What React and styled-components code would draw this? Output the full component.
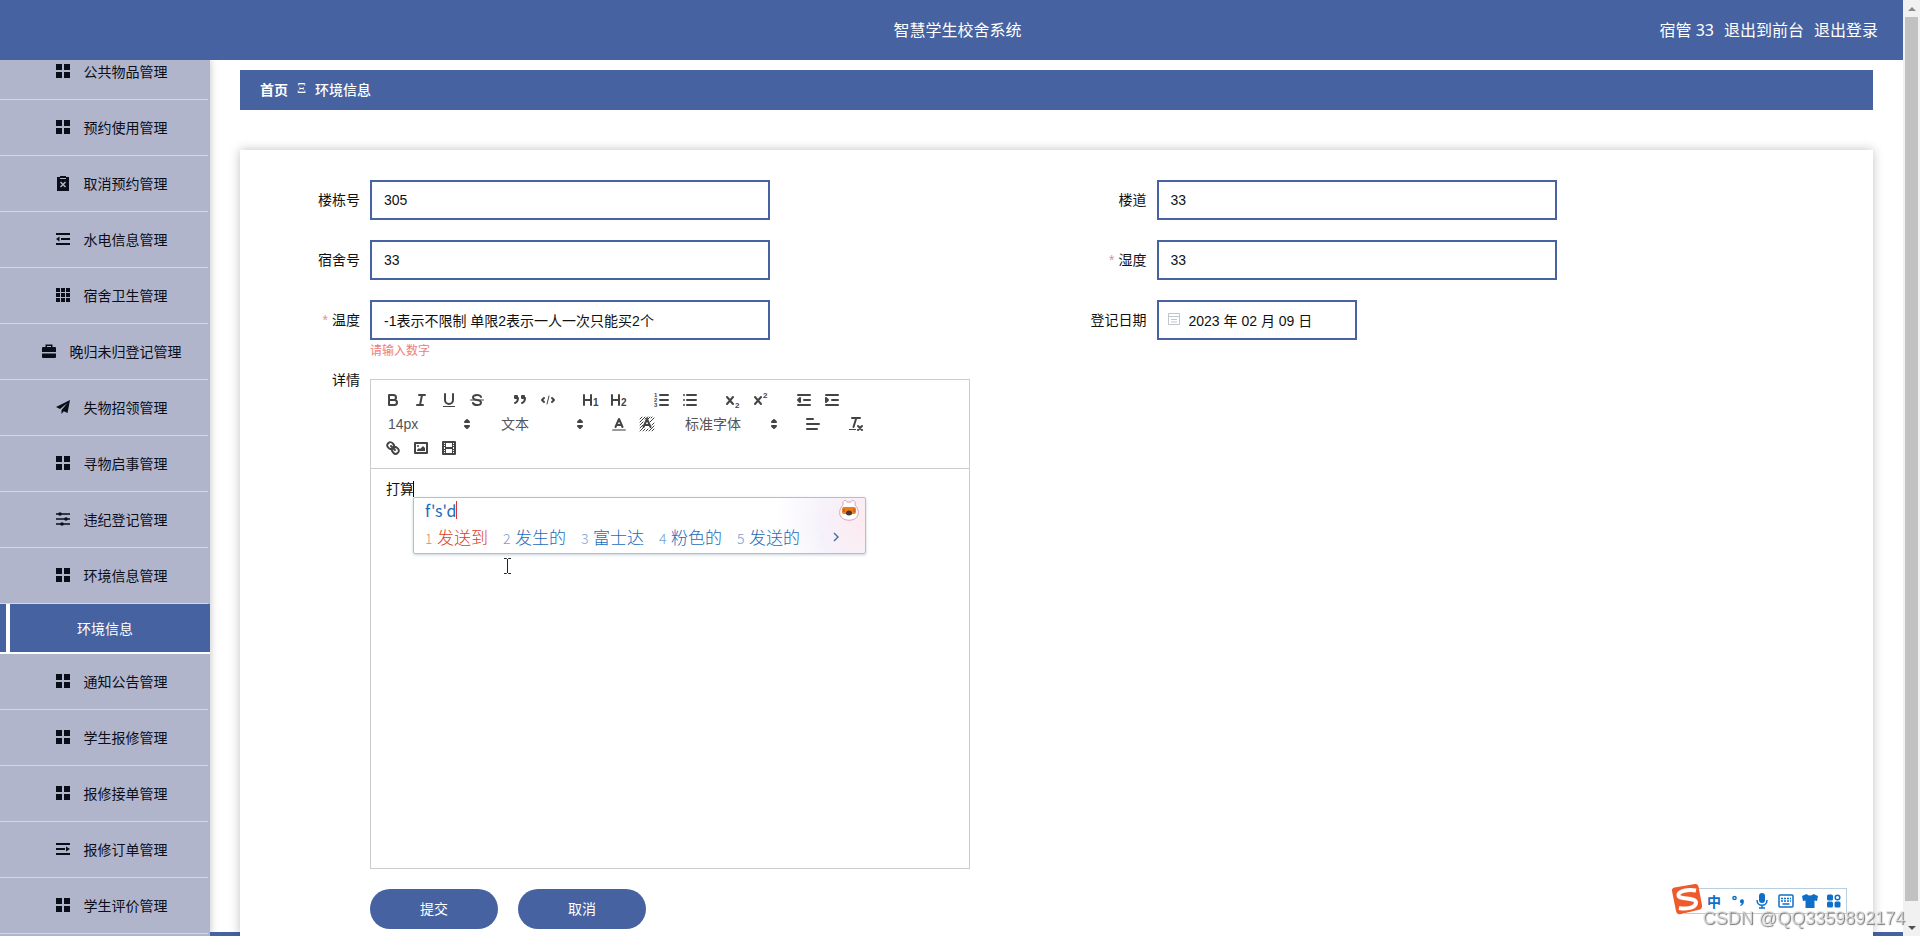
import React, { useState } from "react";
import styled, { createGlobalStyle } from "styled-components";

const BLUE = "#4662a0";
const SANS = `"Liberation Sans", "Noto Sans CJK SC", sans-serif`;

const GlobalStyle = createGlobalStyle`
  * { box-sizing: border-box; }
  body {
    margin: 0;
    overflow: hidden;
    background: #fff;
    color: #111;
    font-family: ${SANS};
    font-size: 14px;
  }
  a { color: inherit; text-decoration: none; }
  button, input, select, textarea { font: inherit; color: inherit; }
`;

const Page = styled.div`
  height: 100vh;
  display: flex;
`;

const Window = styled.div`
  flex: 1;
  min-width: 0;
  display: flex;
  flex-direction: column;
`;

const Header = styled.header`
  position: relative;
  z-index: 1;
  flex: none;
  height: 60px;
  padding: 0 25px 2px 37px;
  display: grid;
  grid-template-columns: 1fr auto 1fr;
  align-items: center;
  background: ${BLUE};
  color: #fff;
  font-size: 16px;
`;

const Title = styled.h1`
  grid-column: 2;
  margin: 0;
  font-size: 16px;
  font-weight: 400;
`;

const UserLinks = styled.div`
  display: flex;
  justify-content: flex-end;
  gap: 10px;
  font-family: "Noto Sans", "Noto Sans CJK SC", sans-serif;
`;

const Body = styled.div`
  flex: 1;
  min-height: 0;
  display: flex;
`;

const Sidebar = styled.nav`
  flex: none;
  width: 210px;
  overflow: hidden;
  display: flex;
  flex-direction: column;
  background: #b0b5cb;
  box-shadow: 0 0 8px rgba(0, 0, 0, 0.25);
`;

const Menu = styled.ul`
  list-style: none;
  margin: -16px 0 0;
  padding: 0;
`;

const MenuLink = styled.a`
  height: 56px;
  margin-right: 2px;
  padding: 0 0 2px 14px;
  display: flex;
  align-items: center;
  justify-content: center;
  gap: 13px;
  border-bottom: 1px solid #d3d8e8;
  color: #0b0d18;
  svg { flex: none; }
`;

const SubLink = styled.a`
  position: relative;
  height: 50px;
  display: flex;
  align-items: center;
  justify-content: center;
  background: ${BLUE};
  border-bottom: 2px solid #fff;
  color: #fff;
  &::before {
    content: "";
    position: absolute;
    left: 6px;
    top: 0;
    bottom: 0;
    width: 4px;
    background: #fff;
  }
`;

const Main = styled.main`
  flex: 1;
  min-width: 0;
  padding: 10px 30px 0;
  display: flex;
  flex-direction: column;
  border-bottom: 4px solid ${BLUE};
`;

const Breadcrumb = styled.div`
  flex: none;
  height: 40px;
  padding: 0 20px 2px;
  display: flex;
  align-items: center;
  gap: 9px;
  background: ${BLUE};
  color: #fff;
  font-weight: 500;
  a { font-weight: 700; }
`;

const Separator = styled.span`
  font-family: "Liberation Serif", serif;
  font-weight: 400;
`;

const Card = styled.form`
  flex: 1;
  min-height: 0;
  margin: 40px 0 -4px;
  padding: 30px;
  background: #fff;
  box-shadow: 0 0 10px rgba(0, 0, 0, 0.25);
`;

const Fields = styled.div`
  display: grid;
  grid-template-columns: 1fr 1fr;
  grid-auto-rows: 60px;
`;

const Field = styled.div`
  display: flex;
  align-items: flex-start;
`;

const Label = styled.label`
  flex: none;
  width: 100px;
  padding-right: 10px;
  line-height: 40px;
  text-align: right;
  &::before {
    content: "${(p) => (p.$required ? "*" : "")}";
    margin-right: 4px;
    color: #e88d96;
  }
`;

const Control = styled.div`
  position: relative;
  width: ${(p) => (p.$short ? 200 : 400)}px;
`;

const Input = styled.input`
  display: block;
  width: 100%;
  height: 40px;
  padding: 0 12px 0 ${(p) => (p.$icon ? 30 : 12)}px;
  border: 2px solid ${BLUE};
  background: #fff;
  outline: none;
`;

const InputIcon = styled.svg`
  position: absolute;
  left: 10px;
  top: 12px;
`;

const ErrorText = styled.div`
  font-size: 12px;
  line-height: 22px;
  color: #f07c7c;
`;

const Editor = styled.div`
  position: relative;
  width: 600px;
  margin-top: 19px;
  border: 1px solid #ccc;
`;

const Toolbar = styled.div`
  padding: 8px;
  display: flex;
  flex-wrap: wrap;
  border-bottom: 1px solid #ccc;
`;

const Group = styled.div`
  display: flex;
  margin-right: 15px;
`;

const ToolButton = styled.button`
  width: 28px;
  height: 24px;
  padding: 3px 5px;
  border: 0;
  background: none;
`;

const ToolIcon = styled.svg`
  display: block;
  width: 18px;
  height: 18px;
  fill: none;
  stroke: #444;
  stroke-width: 2;
  stroke-linecap: round;
  stroke-linejoin: round;
  .thin { stroke-width: 1; }
  .fill { fill: #444; stroke: none; }
  text { fill: #444; stroke: none; font-weight: 700; }
`;

const Picker = styled.div`
  position: relative;
  width: ${(p) => p.$width}px;
  height: 24px;
  color: #555;
  svg {
    position: absolute;
    right: 1px;
    top: 3px;
    pointer-events: none;
  }
`;

const PickerSelect = styled.select`
  width: 100%;
  height: 24px;
  padding: 0 9px;
  appearance: none;
  border: 0;
  background: none;
`;

const TextArea = styled.textarea`
  display: block;
  width: 100%;
  height: 399px;
  padding: 11px 15px;
  border: 0;
  outline: none;
  resize: none;
  line-height: 18px;
`;

const Caret = styled.i`
  position: absolute;
  left: 42px;
  top: 101px;
  width: 1px;
  height: 16px;
  background: #000;
`;

const Ime = styled.div`
  position: absolute;
  left: 42px;
  top: 117px;
  width: 453px;
  height: 57px;
  padding: 0 11px;
  border: 1px solid #a9c3d3;
  border-radius: 2px;
  background: radial-gradient(circle at 100% 45%, #fdeaee 0, #f6f2fb 45px, #fff 90px);
  box-shadow: 0 1px 3px rgba(80, 110, 140, 0.3);
  color: #1a6bb8;
`;

const Composition = styled.div`
  display: flex;
  height: 24px;
  font-family: "Noto Sans CJK SC", sans-serif;
  font-size: 16px;
  line-height: 24px;
  &::after {
    content: "";
    width: 1px;
    height: 18px;
    margin-top: 3px;
    background: #d33;
  }
`;

const Candidates = styled.ol`
  list-style: none;
  margin: 0;
  padding: 0;
  display: flex;
  align-items: center;
  height: 28px;
`;

const Candidate = styled.li`
  width: 78px;
  display: flex;
  align-items: baseline;
  color: ${(p) => (p.$first ? "#d8401f" : "#1a6bb8")};
  font-size: 17px;
  font-weight: 300;
  span {
    width: 12px;
    font-size: 14px;
    font-family: "Noto Sans CJK SC", sans-serif;
    opacity: 0.65;
  }
`;

const Mascot = styled.svg`
  position: absolute;
  right: 5px;
  top: 1px;
`;

const Pointer = styled.svg`
  position: absolute;
  left: 132px;
  top: 177px;
`;

const Actions = styled.div`
  display: flex;
  gap: 20px;
  margin: 20px 0 0 100px;
`;

const Button = styled.button`
  width: 128px;
  height: 40px;
  padding: 0 0 2px;
  border: 0;
  border-radius: 20px;
  background: ${BLUE};
  color: #fff;
`;

const ScrollTrack = styled.div`
  flex: none;
  width: 17px;
  padding: 0 2px;
  display: flex;
  flex-direction: column;
  align-items: center;
  background: #f1f1f1;
`;

const ScrollArrow = styled.span`
  flex: none;
  height: 17px;
  display: flex;
  align-items: center;
  &::before {
    content: "";
    border: 4px solid transparent;
    border-top-width: 0;
    border-bottom-color: ${(p) => (p.$down ? "#505050" : "#8a8a8a")};
    transform: ${(p) => (p.$down ? "rotate(180deg)" : "none")};
  }
`;

const ScrollThumb = styled.div`
  width: 100%;
  height: 98%;
  background: #c1c1c1;
`;

const ScrollLane = styled.div`
  flex: 1;
  width: 100%;
`;

const ImeBar = styled.div`
  position: fixed;
  right: 73px;
  bottom: 22px;
  width: 162px;
  height: 26px;
  padding-left: 16px;
  display: flex;
  align-items: center;
  background: #fff;
  border: 1px solid #b9cfe0;
  color: #0f6fc8;
`;

const BarButton = styled.button`
  width: 24px;
  height: 24px;
  padding: 0;
  border: 0;
  background: none;
  color: inherit;
  font-weight: 700;
  svg { display: block; margin: auto; }
`;

const SogouLogo = styled.svg`
  position: absolute;
  left: -16px;
  top: -6px;
`;

const Watermark = styled.div`
  position: fixed;
  right: 15px;
  bottom: 7px;
  font-size: 18px;
  line-height: 22px;
  color: rgba(225, 225, 225, 0.75);
  text-shadow: 1px 1px 1px #777;
`;

const menuIcons = {
  grid: <path d="M1 1h6v6H1zM9 1h6v6H9zM1 9h6v6H1zM9 9h6v6H9z" />,
  nine: <path d="M1 1h4v4H1zM6 1h4v4H6zM11 1h4v4h-4zM1 6h4v4H1zM6 6h4v4H6zM11 6h4v4h-4zM1 11h4v4H1zM6 11h4v4H6zM11 11h4v4h-4z" />,
  cancel: (
    <>
      <path d="M2 2h3V1h6v1h3v14H2z" />
      <path d="M5.500 7l5 5M10.500 7l-5 5" stroke="#b0b5cb" strokeWidth="1.500" />
      <path d="M5 3.500h6" stroke="#b0b5cb" />
    </>
  ),
  outdent: <path d="M1 2h14v2H1zM6 7h9v2H6zM1 12h14v2H1zM4.500 5.500v5L1 8z" />,
  indent: <path d="M1 2h14v2H1zM1 7h9v2H1zM1 12h14v2H1zM11 5.500v5L15 8z" />,
  bag: <path d="M4.500 4V1.500h7V4H14a1 1 0 0 1 1 1v4H1V5a1 1 0 0 1 1-1zM6 4h4V3H6zM1 10.500h14V14a1 1 0 0 1-1 1H2a1 1 0 0 1-1-1z" />,
  plane: <path d="M15 1L1 8l4 2 7.500-6L6.500 11v4l2.300-2.700 3.700 1.700z" />,
  sliders: (
    <>
      <path d="M1 3h14M1 8h14M1 13h14" stroke="currentColor" strokeWidth="1.300" />
      <circle cx="5" cy="3" r="1.800" />
      <circle cx="11" cy="8" r="1.800" />
      <circle cx="7" cy="13" r="1.800" />
    </>
  ),
};

const MenuIcon = ({ name }) => (
  <svg width="16" height="16" viewBox="0 0 16 16" fill="currentColor">
    {menuIcons[name]}
  </svg>
);

const menu = [
  ["公共物品管理", "grid"],
  ["预约使用管理", "grid"],
  ["取消预约管理", "cancel"],
  ["水电信息管理", "outdent"],
  ["宿舍卫生管理", "nine"],
  ["晚归未归登记管理", "bag"],
  ["失物招领管理", "plane"],
  ["寻物启事管理", "grid"],
  ["违纪登记管理", "sliders"],
  ["环境信息管理", "grid", "环境信息"],
  ["通知公告管理", "grid"],
  ["学生报修管理", "grid"],
  ["报修接单管理", "grid"],
  ["报修订单管理", "indent"],
  ["学生评价管理", "grid"],
];

const H = <path d="M2 4v10M9 4v10M2 9h7" />;
const X = <path d="M3 6l6 7M9 6l-6 7" />;
const A = <path d="M5.500 12L9 4l3.500 8M6.500 10h5" />;

const tools = {
  bold: <path d="M5 4h4.500a2.500 2.500 0 0 1 0 5H5zM5 9h5.500a2.500 2.500 0 0 1 0 5H5z" />,
  italic: <path d="M7 4h6M5 14h6M8 14l2-10" />,
  underline: (
    <>
      <path d="M5 3v6a4 4 0 0 0 8 0V3" />
      <rect className="fill" x="3" y="15" width="12" height="1" />
    </>
  ),
  strike: (
    <>
      <path d="M13 6C12.500 4.700 11 4 9 4 6.800 4 5 5 5 6.500 5 8 6.300 8.700 9 9s4 1 4 2.500S11.200 14 9 14c-2 0-3.500-.8-4-2" />
      <path className="thin" d="M2.500 9h13" />
    </>
  ),
  quote: (
    <>
      <rect x="4" y="5" width="2" height="2" fill="#444" />
      <rect x="11" y="5" width="2" height="2" fill="#444" />
      <path d="M7 7c0 4-3 5-3 5M14 7c0 4-3 5-3 5" />
    </>
  ),
  code: (
    <>
      <path d="M5 7L3 9l2 2M13 7l2 2-2 2" />
      <path className="thin" d="M10 5L8 13" />
    </>
  ),
  h1: <>{H}<text x="11" y="15" fontSize="10">1</text></>,
  h2: <>{H}<text x="11" y="15" fontSize="10">2</text></>,
  ordered: (
    <>
      <path d="M7 4h8M7 9h8M7 14h8" />
      <text x="1" y="6" fontSize="6">1</text>
      <text x="1" y="11" fontSize="6">2</text>
      <text x="1" y="16" fontSize="6">3</text>
    </>
  ),
  bullet: <path d="M6 4h9M6 9h9M6 14h9M3 4v0M3 9v0M3 14v0" />,
  sub: <>{X}<text x="11" y="17" fontSize="8">2</text></>,
  sup: <>{X}<text x="11" y="7" fontSize="8">2</text></>,
  outdent: (
    <>
      <path d="M3 14h12M3 4h12M9 9h6" />
      <path d="M5 7v4L3 9z" fill="#444" />
    </>
  ),
  indent: (
    <>
      <path d="M3 14h12M3 4h12M9 9h6" />
      <path d="M3 7v4l2-2z" fill="#444" />
    </>
  ),
  color: (
    <>
      {A}
      <path d="M3 15h12" stroke="#999" />
    </>
  ),
  background: (
    <>
      <path
        className="thin"
        d="M2 4l2-2M2 7l5-5M2 10l3-3M7 4l3-2M2 13l3-3M2 16l3-3M5 16l2-2M8 16l2-2M11 16l2-2M14 16l2-2M13 14l3-3M14 10l2-2M12 7l4-4M10 4l2-2M13 3l1-1"
      />
      {A}
    </>
  ),
  align: <path d="M3 4h6M3 9h12M3 14h10" />,
  clean: (
    <>
      <path d="M5 3h8M9.300 3L6.500 12M11 11l4 4M15 11l-4 4" />
      <rect className="fill" x="2" y="14" width="7" height="1" />
    </>
  ),
  link: (
    <>
      <path d="M7 7l4 4" />
      <path d="M8.900 4.577a3.476 3.476 0 0 1 .36 4.679A3.476 3.476 0 0 1 4.577 8.900C3.185 7.500 2.035 6.400 4.217 4.217S7.500 3.185 8.900 4.577ZM13.423 9.100a3.476 3.476 0 0 0-4.679-.36 3.476 3.476 0 0 0 .36 4.679c1.392 1.392 2.500 2.542 4.679.36S14.815 10.500 13.423 9.100Z" />
    </>
  ),
  image: (
    <>
      <rect x="3" y="4" width="12" height="10" />
      <circle className="fill" cx="6" cy="7" r="1" />
      <path className="fill" d="M5 12v-1l2-2 1 1 3-3 2 2v3z" />
    </>
  ),
  video: (
    <>
      <rect x="3" y="3" width="12" height="12" />
      <path className="fill" d="M5 3h1v12H5zM12 3h1v12h-1zM5 8h8v2H5zM3 5h3v1H3zM3 7h3v1H3zM3 10h3v1H3zM3 12h3v1H3zM12 5h3v1h-3zM12 7h3v1h-3zM12 10h3v1h-3zM12 12h3v1h-3z" />
    </>
  ),
};

const Tool = ({ name }) => (
  <ToolButton type="button" aria-label={name}>
    <ToolIcon viewBox="0 0 18 18">{tools[name]}</ToolIcon>
  </ToolButton>
);

const ToolPicker = ({ label, value, width }) => (
  <Group>
    <Picker $width={width}>
      <PickerSelect aria-label={label} defaultValue={value}>
        <option>{value}</option>
      </PickerSelect>
      <svg width="18" height="18" viewBox="0 0 18 18" fill="#444" stroke="#444" strokeWidth="2" strokeLinejoin="round">
        <path d="M7 11l2 2 2-2zM7 7l2-2 2 2z" />
      </svg>
    </Picker>
  </Group>
);

const ToolGroup = ({ names }) => (
  <Group>
    {names.map((name) => (
      <Tool key={name} name={name} />
    ))}
  </Group>
);

const TextField = ({ id, label, value, required, error }) => {
  const [text, setText] = useState(value);
  return (
    <Field>
      <Label htmlFor={id} $required={required}>{label}</Label>
      <Control>
        <Input id={id} value={text} onChange={(e) => setText(e.target.value)} />
        {error && <ErrorText>{error}</ErrorText>}
      </Control>
    </Field>
  );
};

const DateField = ({ id, label, value }) => (
  <Field>
    <Label htmlFor={id}>{label}</Label>
    <Control $short>
      <Input id={id} defaultValue={value} $icon />
      <InputIcon width="14" height="14" viewBox="0 0 14 14" fill="none" stroke="#c0c4cc">
        <path d="M1.500 1.500h11v11h-11zM1.500 4.500h11M4 7.500h6M4 10h6" />
      </InputIcon>
    </Control>
  </Field>
);

const candidates = ["发送到", "发生的", "富士达", "粉色的", "发送的"];

const ImePopup = () => (
  <Ime>
    <Composition>f's'd</Composition>
    <Candidates>
      {candidates.map((word, i) => (
        <Candidate key={word} $first={i === 0}>
          <span>{i + 1}</span>
          {word}
        </Candidate>
      ))}
      <svg width="26" height="16" viewBox="0 0 26 16" fill="none">
        <path d="M9 5L6 9l3 4" stroke="#eef0f5" />
        <path d="M19 5l4 4-4 4" stroke="#3f6f9f" strokeWidth="1.400" />
      </svg>
    </Candidates>
    <Mascot width="22" height="24" viewBox="0 0 22 24">
      <path d="M5 6C4 1 8 0 9 3h4c1-3 5-2 4 3 3 3 4 7 3 10-2 7-16 7-18 0-1-3 0-7 3-10z" fill="#fff" stroke="#d9a3b8" />
      <rect x="4" y="8" width="14" height="7" rx="2" fill="#ee7d1b" />
      <path d="M6 10v3M16 10v3" stroke="#c14e12" />
      <ellipse cx="11" cy="14" rx="3" ry="2.500" fill="#4a3530" />
    </Mascot>
  </Ime>
);

const InputMethodBar = () => (
  <ImeBar>
    <SogouLogo width="34" height="34" viewBox="0 0 34 34">
      <path d="M2 8q-.5-3 2.500-3.500L25 1q3-.5 3.500 2.500L32 22q.5 3-2 4.500L11 31q-4 1-5-3z" fill="#ee5a2b" />
      <path d="M26 7.500C18 6 8 8 8.500 12.500S26 14 26 19.500C26 25 16 26.500 9 25" fill="none" stroke="#fff" strokeWidth="4" />
    </SogouLogo>
    <BarButton type="button">中</BarButton>
    <BarButton type="button" aria-label="标点">
      <svg width="16" height="16" viewBox="0 0 16 16" fill="currentColor">
        <circle cx="4.500" cy="5" r="1.600" fill="none" stroke="currentColor" strokeWidth="1.500" />
        <path d="M10 8.500a2 2 0 1 1 3.800.5c0 2-1.300 3.500-3.300 4l-.3-1c1-.5 1.500-1 1.500-1.700-1 0-1.700-.8-1.700-1.800z" />
      </svg>
    </BarButton>
    <BarButton type="button" aria-label="语音">
      <svg width="16" height="16" viewBox="0 0 16 16" fill="currentColor">
        <rect x="5" y="0" width="6" height="10" rx="3" />
        <path d="M3 7c0 7 10 7 10 0M8 12v3M5 15h6" fill="none" stroke="currentColor" strokeWidth="1.500" />
      </svg>
    </BarButton>
    <BarButton type="button" aria-label="键盘">
      <svg width="16" height="16" viewBox="0 0 16 16">
        <rect x="1" y="2" width="14" height="12" rx="1" fill="none" stroke="currentColor" strokeWidth="1.500" />
        <path d="M3 5.500h10M3 8h10" stroke="currentColor" strokeWidth="1.500" strokeDasharray="2 1" />
        <path d="M4.500 11h7" stroke="currentColor" strokeWidth="1.500" />
      </svg>
    </BarButton>
    <BarButton type="button" aria-label="皮肤">
      <svg width="16" height="16" viewBox="0 0 16 16" fill="currentColor">
        <path d="M4.500 1q3.500 3 7 0L16 3l-1 5-2.500-.5V15h-9V7.500L1 8 0 3z" />
      </svg>
    </BarButton>
    <BarButton type="button" aria-label="工具箱">
      <svg width="16" height="16" viewBox="0 0 16 16" fill="currentColor">
        <rect x="1" y="1.500" width="6" height="6" rx="1.500" />
        <circle cx="11.500" cy="4.500" r="2.300" fill="none" stroke="currentColor" strokeWidth="1.500" />
        <rect x="1" y="8.500" width="6" height="6" rx="1.500" />
        <rect x="8.500" y="8.500" width="6" height="6" rx="1.500" />
      </svg>
    </BarButton>
  </ImeBar>
);

const App = () => {
  const [detail, setDetail] = useState("打算");

  return (
    <>
      <GlobalStyle />
      <Page>
        <Window>
          <Header>
            <Title>智慧学生校舍系统</Title>
            <UserLinks>
              <span>宿管 33</span>
              <a href="#front">退出到前台</a>
              <a href="#logout">退出登录</a>
            </UserLinks>
          </Header>
          <Body>
            <Sidebar>
              <Menu>
                {menu.map(([text, icon, child]) => (
                  <li key={text}>
                    <MenuLink href="#menu">
                      <MenuIcon name={icon} />
                      {text}
                    </MenuLink>
                    {child && <SubLink href="#env">{child}</SubLink>}
                  </li>
                ))}
              </Menu>
            </Sidebar>
            <Main>
              <Breadcrumb>
                <a href="#home">首页</a>
                <Separator>Ξ</Separator>
                <span>环境信息</span>
              </Breadcrumb>
              <Card>
                <Fields>
                  <TextField id="building" label="楼栋号" value="305" />
                  <TextField id="corridor" label="楼道" value="33" />
                  <TextField id="room" label="宿舍号" value="33" />
                  <TextField id="humidity" label="湿度" value="33" required />
                  <TextField
                    id="temperature"
                    label="温度"
                    value="-1表示不限制 单限2表示一人一次只能买2个"
                    required
                    error="请输入数字"
                  />
                  <DateField id="date" label="登记日期" value="2023 年 02 月 09 日" />
                </Fields>
                <Field>
                  <Label htmlFor="detail">详情</Label>
                  <Editor>
                    <Toolbar>
                      <ToolGroup names={["bold", "italic", "underline", "strike"]} />
                      <ToolGroup names={["quote", "code"]} />
                      <ToolGroup names={["h1", "h2"]} />
                      <ToolGroup names={["ordered", "bullet"]} />
                      <ToolGroup names={["sub", "sup"]} />
                      <ToolGroup names={["outdent", "indent"]} />
                      <ToolPicker label="字号" value="14px" width={98} />
                      <ToolPicker label="标题" value="文本" width={98} />
                      <ToolGroup names={["color", "background"]} />
                      <ToolPicker label="字体" value="标准字体" width={108} />
                      <ToolGroup names={["align"]} />
                      <ToolGroup names={["clean"]} />
                      <ToolGroup names={["link", "image", "video"]} />
                    </Toolbar>
                    <TextArea id="detail" value={detail} onChange={(e) => setDetail(e.target.value)} />
                    <Caret />
                    <ImePopup />
                    <Pointer width="9" height="18" viewBox="0 0 9 18" fill="none" stroke="#222">
                      <path d="M1 1.500h2.500l1 1 1-1H8M4.500 2v14M1 16.500h2.500l1-1 1 1H8" />
                    </Pointer>
                  </Editor>
                </Field>
                <Actions>
                  <Button type="button">提交</Button>
                  <Button type="button">取消</Button>
                </Actions>
              </Card>
            </Main>
          </Body>
        </Window>
        <ScrollTrack>
          <ScrollArrow />
          <ScrollLane>
            <ScrollThumb />
          </ScrollLane>
          <ScrollArrow $down />
        </ScrollTrack>
      </Page>
      <InputMethodBar />
      <Watermark>CSDN @QQ3359892174</Watermark>
    </>
  );
};

export default App;
